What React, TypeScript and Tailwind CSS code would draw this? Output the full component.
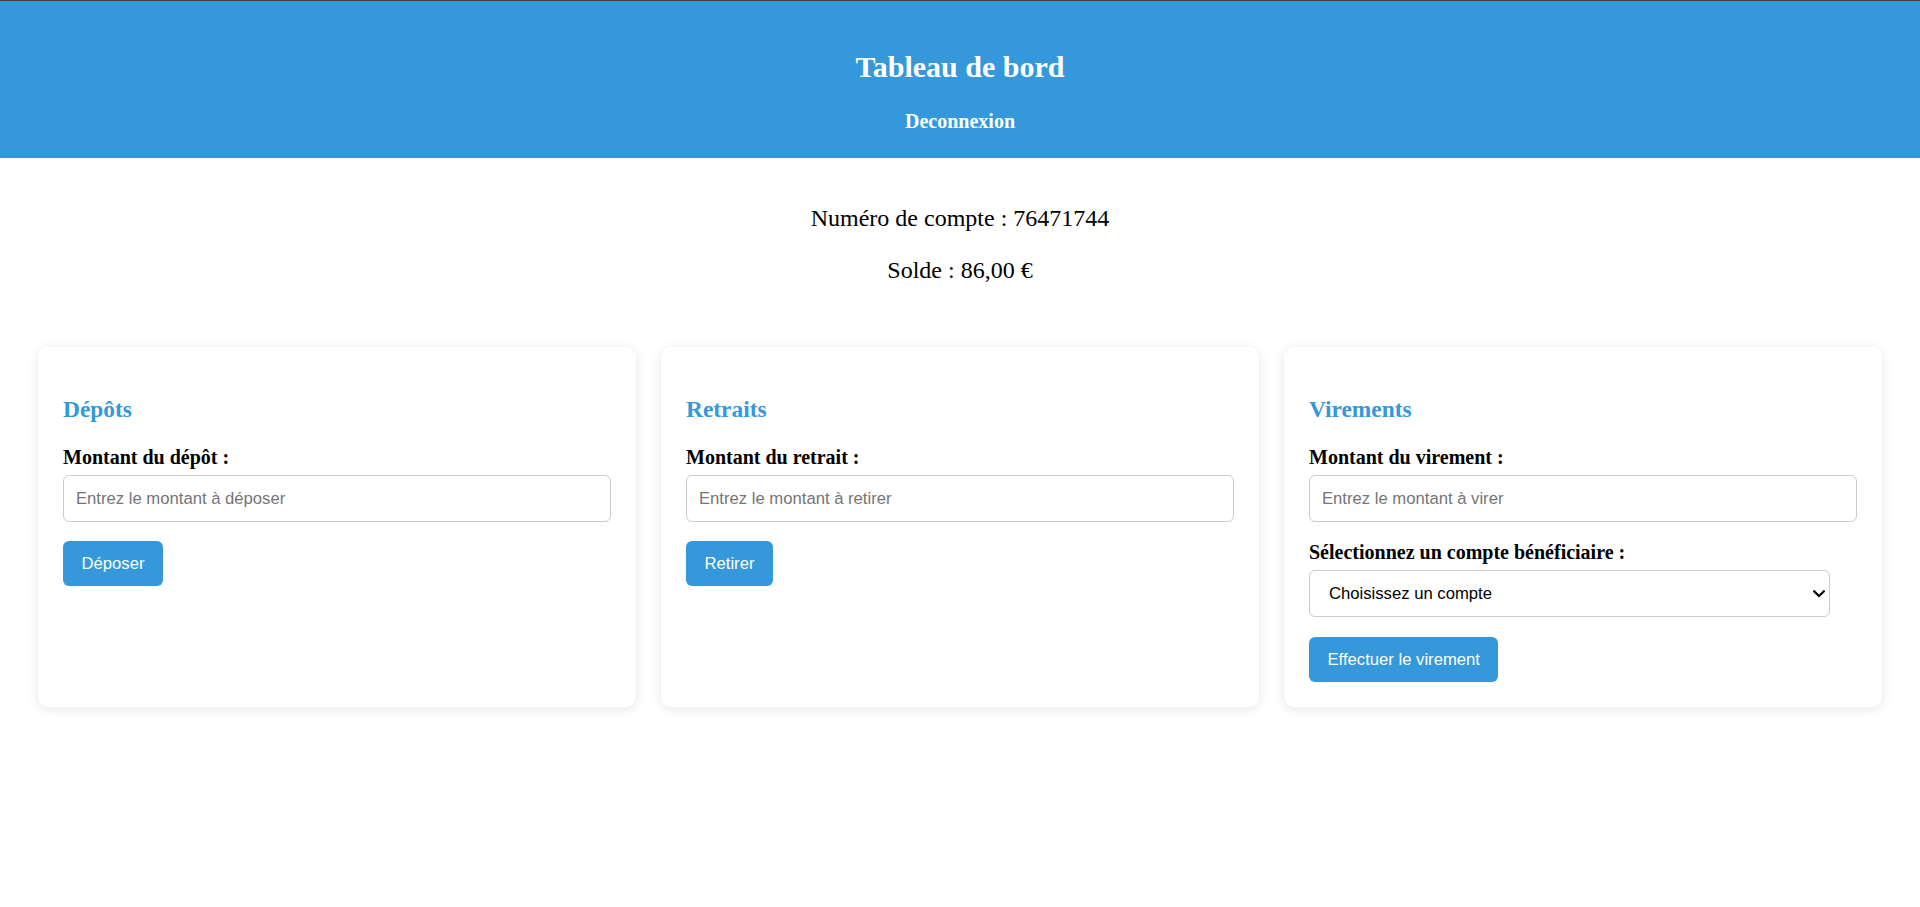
import React from "react";

const serif = "font-['Liberation_Serif','Times_New_Roman',serif]";
const sans = "font-['Liberation_Sans',Arial,sans-serif]";

function Label({ children }: { children: React.ReactNode }) {
  return (
    <label className={`block ${serif} font-bold text-[20px] leading-[23px] text-black`}>
      {children}
    </label>
  );
}

function AmountInput({ placeholder }: { placeholder: string }) {
  return (
    <input
      type="text"
      placeholder={placeholder}
      className={`mt-[6px] block w-full h-[47px] border border-[#cccccc] rounded-[6px] bg-white pl-[12px] pr-[12px] ${sans} text-[16.67px] text-black placeholder:text-[#757575] outline-none`}
    />
  );
}

function ActionButton({ children, mt }: { children: React.ReactNode; mt: string }) {
  return (
    <button
      type="button"
      className={`${mt} block h-[45px] px-[18.5px] rounded-[6px] bg-[#3498db] text-white ${sans} text-[16.67px] leading-[19px] cursor-pointer`}
    >
      {children}
    </button>
  );
}

function CardTitle({ children }: { children: React.ReactNode }) {
  return (
    <h3 className={`mt-[24px] ${serif} font-bold text-[23.4px] leading-[27px] text-[#3498db]`}>
      {children}
    </h3>
  );
}

function Card({ children }: { children: React.ReactNode }) {
  return (
    <div className="bg-white rounded-[10px] shadow-[0_2px_12px_rgba(0,0,0,0.1)] p-[25px]">
      {children}
    </div>
  );
}

export default function App() {
  return (
    <div className={`min-h-[907px] bg-white ${serif} text-black`}>
      <header className="bg-[#3498db] border-t border-[#404040] pt-[49px] pb-[25px] flex flex-col items-center">
        <h1 className={`${serif} font-bold text-[30px] leading-[34px] text-white`}>Tableau de bord</h1>
        <button
          type="button"
          className={`mt-[26px] ${serif} font-bold text-[20px] leading-[23px] text-white bg-transparent cursor-pointer`}
        >
          Deconnexion
        </button>
      </header>

      <section className="flex flex-col items-center">
        <p className={`mt-[46px] ${serif} text-[24px] leading-[28px]`}>Numéro de compte : 76471744</p>
        <p className={`mt-[24px] ${serif} text-[24px] leading-[28px]`}>Solde : 86,00 €</p>
      </section>

      <main className="mt-[63px] px-[38px] grid grid-cols-3 gap-[25px]">
        <Card>
          <CardTitle>Dépôts</CardTitle>
          <div className="mt-[23px]">
            <Label>Montant du dépôt :</Label>
            <AmountInput placeholder="Entrez le montant à déposer" />
            <ActionButton mt="mt-[19px]">Déposer</ActionButton>
          </div>
        </Card>

        <Card>
          <CardTitle>Retraits</CardTitle>
          <div className="mt-[23px]">
            <Label>Montant du retrait :</Label>
            <AmountInput placeholder="Entrez le montant à retirer" />
            <ActionButton mt="mt-[19px]">Retirer</ActionButton>
          </div>
        </Card>

        <Card>
          <CardTitle>Virements</CardTitle>
          <div className="mt-[23px]">
            <Label>Montant du virement :</Label>
            <AmountInput placeholder="Entrez le montant à virer" />
            <div className="mt-[19px]">
              <Label>Sélectionnez un compte bénéficiaire :</Label>
            </div>
            <div className="relative mt-[6px] w-[95%]">
              <select
                defaultValue=""
                className={`appearance-none block w-full h-[47px] border border-[#cccccc] rounded-[6px] bg-white pl-[19px] pr-[24px] ${sans} text-[16.67px] text-black outline-none`}
              >
                <option value="">Choisissez un compte</option>
              </select>
              <svg
                className="pointer-events-none absolute right-[5px] top-1/2 -translate-y-1/2"
                width="12"
                height="8"
                viewBox="0 0 12 8"
                fill="none"
              >
                <path d="M1.2 1.4 L6 6 L10.8 1.4" stroke="#000" strokeWidth="2.2" strokeLinecap="square" />
              </svg>
            </div>
            <ActionButton mt="mt-[20px]">Effectuer le virement</ActionButton>
          </div>
        </Card>
      </main>
    </div>
  );
}
